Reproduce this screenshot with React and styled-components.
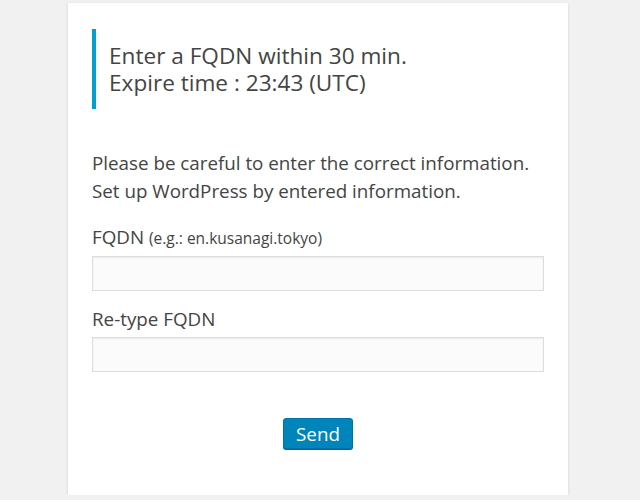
import React from "react";
import styled, { createGlobalStyle } from "styled-components";

const Global = createGlobalStyle`
  html, body { margin: 0; padding: 0; background: #f1f1f1; }
  body { font-family: "Open Sans", "Noto Sans", sans-serif; color: #444; }
  * { box-sizing: border-box; }
`;

const Card = styled.div`
  width: 500px;
  margin: 3px 0 0 68px;
  background: #fff;
  box-shadow: 0 1px 3px rgba(0, 0, 0, 0.13);
  padding: 26px 24px 46px;
`;

const Notice = styled.div`
  border-left: 4px solid #00a0d2;
  padding: 13px 0 13px 13px;
  font-size: 22.6px;
  line-height: 27px;
  color: #444;
`;

const Intro = styled.p`
  margin: 40px 0 0;
  font-size: 18.8px;
  line-height: 28px;
`;

const Field = styled.div`
  margin-top: ${(p) => p.$top}px;
  display: flex;
  flex-direction: column;
`;

const Label = styled.label`
  font-size: 18.8px;
  line-height: 24px;
  margin-bottom: 6px;
`;

const Hint = styled.span`
  font-size: 15.5px;
`;

const Input = styled.input`
  width: 100%;
  height: 35px;
  border: 1px solid #ddd;
  background: #fbfbfb;
  box-shadow: inset 0 1px 2px rgba(0, 0, 0, 0.07);
  outline: none;
  font-size: 18px;
`;

const Actions = styled.div`
  display: flex;
  justify-content: center;
  margin-top: 46px;
`;

const Button = styled.button`
  height: 31px;
  padding: 0 12px;
  background: #0085ba;
  border: 1px solid #0073aa;
  border-radius: 3px;
  box-shadow: 0 1px 0 #006799;
  color: #fff;
  font-family: inherit;
  font-size: 18.8px;
  line-height: 28px;
  cursor: pointer;
`;

export default function App() {
  return (
    <>
      <Global />
      <Card>
        <Notice>
          Enter a FQDN within 30 min.
          <br />
          Expire time : 23:43 (UTC)
        </Notice>
        <Intro>
          Please be careful to enter the correct information.
          <br />
          Set up WordPress by entered information.
        </Intro>
        <Field $top={20}>
          <Label>
            FQDN <Hint>(e.g.: en.kusanagi.tokyo)</Hint>
          </Label>
          <Input type="text" />
        </Field>
        <Field $top={16}>
          <Label>Re-type FQDN</Label>
          <Input type="text" />
        </Field>
        <Actions>
          <Button>Send</Button>
        </Actions>
      </Card>
    </>
  );
}
